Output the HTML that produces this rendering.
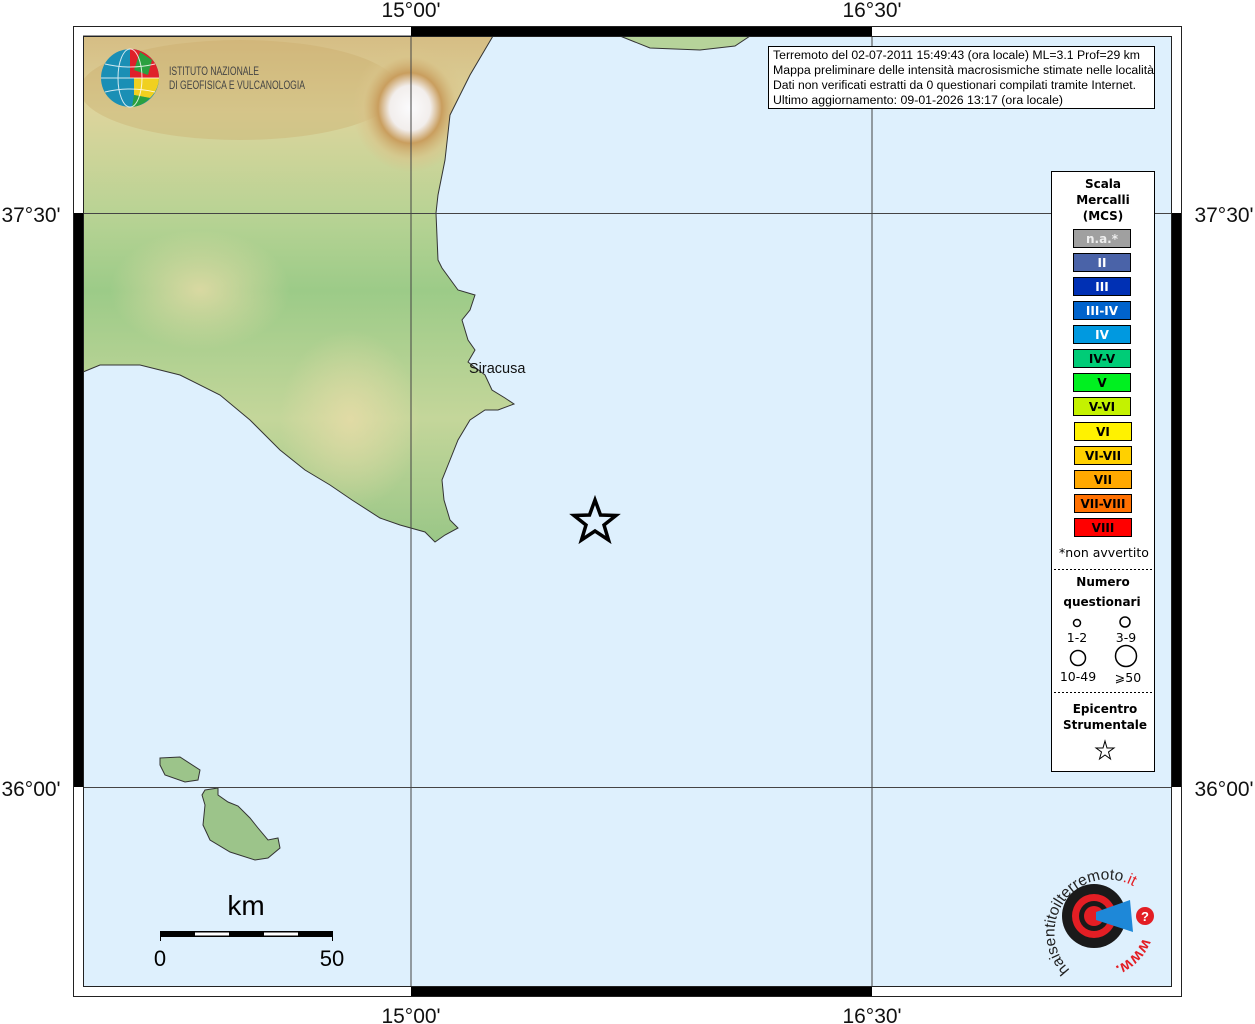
<!DOCTYPE html>
<html><head><meta charset="utf-8"><style>
html,body{margin:0;padding:0;background:#fff;}
svg{display:block;font-family:"Liberation Sans",sans-serif;}
.lt{font-family:"DejaVu Sans",sans-serif;font-weight:bold;font-size:12px;text-anchor:middle;}
</style></head><body>
<svg width="1255" height="1024" viewBox="0 0 1255 1024" xmlns="http://www.w3.org/2000/svg">
<defs>
<linearGradient id="land" x1="0" y1="0" x2="0" y2="1">
<stop offset="0" stop-color="#d6bd84"/>
<stop offset="0.15" stop-color="#dcd49c"/>
<stop offset="0.35" stop-color="#b8d394"/>
<stop offset="0.5" stop-color="#9ccb88"/>
<stop offset="0.75" stop-color="#c4d69a"/>
<stop offset="1" stop-color="#98c686"/>
</linearGradient>
<radialGradient id="etna" cx="0.5" cy="0.5" r="0.5">
<stop offset="0" stop-color="#fbfbfd"/>
<stop offset="0.35" stop-color="#f2eeec"/>
<stop offset="0.55" stop-color="#c99e5e"/>
<stop offset="0.8" stop-color="#d9c48a" stop-opacity="0.6"/>
<stop offset="1" stop-color="#d9c48a" stop-opacity="0"/>
</radialGradient>
<radialGradient id="hills" cx="0.5" cy="0.5" r="0.5">
<stop offset="0" stop-color="#e8dca8" stop-opacity="0.8"/>
<stop offset="1" stop-color="#e8dca8" stop-opacity="0"/>
</radialGradient>
<clipPath id="sic"><path d="M83,36 L493,36 L470,75 L450,115 L445,160 L438,195 L436,213 L438,260 L442,268 L458,290 L475,295 L470,310 L462,320 L468,340 L475,350 L468,362 L485,375 L492,390 L505,398 L514,404 L498,410 L485,410 L470,420 L458,440 L450,460 L442,480 L444,500 L450,520 L458,528 L445,535 L435,542 L425,532 L400,525 L380,518 L352,500 L330,485 L305,470 L280,450 L250,420 L220,395 L180,375 L140,365 L100,365 L83,372 Z"/></clipPath>
</defs>
<rect width="1255" height="1024" fill="#fff"/>
<rect x="83" y="36" width="1089" height="951" fill="#def0fd"/>
<rect x="83" y="36" width="440" height="510" fill="url(#land)" clip-path="url(#sic)"/>
<g clip-path="url(#sic)">
<ellipse cx="350" cy="420" rx="70" ry="90" fill="url(#hills)"/>
<ellipse cx="200" cy="290" rx="90" ry="60" fill="url(#hills)"/>
<ellipse cx="240" cy="90" rx="160" ry="50" fill="#c9a868" opacity="0.35"/>
<ellipse cx="410" cy="108" rx="58" ry="64" fill="url(#etna)"/>
</g>
<path d="M83,36 L493,36 L470,75 L450,115 L445,160 L438,195 L436,213 L438,260 L442,268 L458,290 L475,295 L470,310 L462,320 L468,340 L475,350 L468,362 L485,375 L492,390 L505,398 L514,404 L498,410 L485,410 L470,420 L458,440 L450,460 L442,480 L444,500 L450,520 L458,528 L445,535 L435,542 L425,532 L400,525 L380,518 L352,500 L330,485 L305,470 L280,450 L250,420 L220,395 L180,375 L140,365 L100,365 L83,372" fill="none" stroke="#333" stroke-width="1"/>
<path d="M620,36 L750,36 L735,46 L700,50 L650,48 Z" fill="#b6d39a" stroke="#333" stroke-width="1"/>
<path d="M160,758 L180,757 L200,770 L198,780 L185,782 L165,775 L160,765 Z" fill="#9cc48a" stroke="#333" stroke-width="1"/>
<path d="M205,790 L218,788 L218,795 L228,802 L238,806 L250,818 L258,828 L268,840 L278,838 L280,848 L268,858 L255,860 L230,852 L210,840 L203,825 L205,805 L202,795 Z" fill="#9cc48a" stroke="#333" stroke-width="1"/>
<g stroke="#444" stroke-width="1">
<line x1="411" y1="36" x2="411" y2="987"/><line x1="872" y1="36" x2="872" y2="987"/>
<line x1="83" y1="213.5" x2="1172" y2="213.5"/><line x1="83" y1="787.5" x2="1172" y2="787.5"/>
</g>
<rect x="73.5" y="26.5" width="1108" height="970" fill="none" stroke="#222"/>
<rect x="83.5" y="36.5" width="1088" height="950" fill="none" stroke="#222"/>
<rect x="411" y="27" width="461" height="9" fill="#000"/>
<rect x="411" y="987" width="461" height="9" fill="#000"/>
<rect x="74" y="213" width="9" height="574" fill="#000"/>
<rect x="1172" y="213" width="9" height="574" fill="#000"/>
<g font-size="21" fill="#111" text-anchor="middle">
<text x="411" y="17">15°00'</text><text x="872" y="17">16°30'</text>
<text x="411" y="1023">15°00'</text><text x="872" y="1023">16°30'</text>
<text x="31" y="222">37°30'</text><text x="31" y="796">36°00'</text>
<text x="1224" y="222">37°30'</text><text x="1224" y="796">36°00'</text>
</g>
<text x="469" y="373" font-size="14.5" fill="#111">Siracusa</text>
<path d="M595,500 L600.5,515 L616,515.5 L604,525 L608.5,540 L595,531 L581.5,540 L586,525 L574,515.5 L589.5,515 Z" fill="none" stroke="#000" stroke-width="3.5"/>
<circle cx="130" cy="78" r="29" fill="#1a8fb5"/>
<path d="M130,49 A29,29 0 0 1 159,78 L130,78 Z" fill="#e0202a"/>
<path d="M140,52 L152,60 L148,75 L134,70 Z" fill="#2aa040"/>
<path d="M134,78 L159,78 A29,29 0 0 1 150,98 L134,95 Z" fill="#f0d020"/>
<path d="M134,95 L150,98 A29,29 0 0 1 132,107 Z" fill="#2aa040"/>
<g stroke="#fff" stroke-width="1" fill="none" opacity="0.8"><ellipse cx="130" cy="78" rx="12" ry="29"/><line x1="101" y1="78" x2="159" y2="78"/><path d="M105,64 Q130,70 155,64"/><path d="M105,92 Q130,86 155,92"/></g>
<text x="169" y="75" font-size="12" fill="#444" textLength="90" lengthAdjust="spacingAndGlyphs">ISTITUTO NAZIONALE</text>
<text x="169" y="89" font-size="12" fill="#444" textLength="136" lengthAdjust="spacingAndGlyphs">DI GEOFISICA E VULCANOLOGIA</text>
<rect x="768.5" y="46.5" width="386" height="62" fill="#fff" stroke="#000"/>
<g font-size="11.5" fill="#000">
<text x="773" y="59" textLength="367" lengthAdjust="spacingAndGlyphs">Terremoto del 02-07-2011 15:49:43 (ora locale) ML=3.1 Prof=29 km</text>
<text x="773" y="74" textLength="381" lengthAdjust="spacingAndGlyphs">Mappa preliminare delle intensità macrosismiche stimate nelle località</text>
<text x="773" y="89" textLength="363" lengthAdjust="spacingAndGlyphs">Dati non verificati estratti da 0 questionari compilati tramite Internet.</text>
<text x="773" y="104" textLength="290" lengthAdjust="spacingAndGlyphs">Ultimo aggiornamento: 09-01-2026 13:17 (ora locale)</text>
</g>
<rect x="1051.5" y="171.5" width="103" height="600" fill="#fff" stroke="#000"/>
<g class="lt" fill="#000">
<text x="1103" y="188">Scala</text><text x="1103" y="204">Mercalli</text><text x="1103" y="220">(MCS)</text>
</g>
<g stroke="#000" stroke-width="1">
<rect x="1073.5" y="229.5" width="57" height="18" fill="#a0a0a0"/>
<rect x="1073.5" y="253.5" width="57" height="18" fill="#4a63a8"/>
<rect x="1073.5" y="277.5" width="57" height="18" fill="#0030b4"/>
<rect x="1073.5" y="301.5" width="57" height="18" fill="#0063cc"/>
<rect x="1073.5" y="325.5" width="57" height="18" fill="#0099e0"/>
<rect x="1073.5" y="349.5" width="57" height="18" fill="#00cc77"/>
<rect x="1073.5" y="373.5" width="57" height="18" fill="#00f020"/>
<rect x="1073.5" y="397.5" width="57" height="18" fill="#c4f200"/>
<rect x="1074.5" y="422.5" width="57" height="18" fill="#fff200"/>
<rect x="1074.5" y="446.5" width="57" height="18" fill="#ffd000"/>
<rect x="1074.5" y="470.5" width="57" height="18" fill="#ffa800"/>
<rect x="1074.5" y="494.5" width="57" height="18" fill="#ff7000"/>
<rect x="1074.5" y="518.5" width="57" height="18" fill="#ff0000"/>
</g>
<g class="lt">
<text x="1102" y="243" fill="#eee">n.a.*</text>
<text x="1102" y="267" fill="#fff">II</text>
<text x="1102" y="291" fill="#fff">III</text>
<text x="1102" y="315" fill="#fff">III-IV</text>
<text x="1102" y="339" fill="#fff">IV</text>
<text x="1102" y="363" fill="#000">IV-V</text>
<text x="1102" y="387" fill="#000">V</text>
<text x="1102" y="411" fill="#000">V-VI</text>
<text x="1103" y="436" fill="#000">VI</text>
<text x="1103" y="460" fill="#000">VI-VII</text>
<text x="1103" y="484" fill="#000">VII</text>
<text x="1103" y="508" fill="#000">VII-VIII</text>
<text x="1103" y="532" fill="#000">VIII</text>
</g>
<text x="1104" y="557" font-size="12.5" text-anchor="middle" font-family="DejaVu Sans,sans-serif">*non avvertito</text>
<line x1="1054" y1="569.5" x2="1152" y2="569.5" stroke="#000" stroke-dasharray="2,2"/>
<g class="lt"><text x="1103" y="586">Numero</text><text x="1102" y="606">questionari</text></g>
<g fill="none" stroke="#000" stroke-width="1.5">
<circle cx="1077" cy="623" r="3.5"/><circle cx="1125" cy="622" r="5"/>
<circle cx="1078" cy="658" r="7.5"/><circle cx="1126" cy="656" r="10.5"/>
</g>
<g font-size="12.5" text-anchor="middle" font-family="DejaVu Sans,sans-serif">
<text x="1077" y="642">1-2</text><text x="1126" y="642">3-9</text>
<text x="1078" y="681">10-49</text><text x="1128" y="682">⩾50</text>
</g>
<line x1="1054" y1="692.5" x2="1152" y2="692.5" stroke="#000" stroke-dasharray="2,2"/>
<g class="lt"><text x="1105" y="713">Epicentro</text><text x="1105" y="729">Strumentale</text></g>
<path d="M1105,741 L1107,748 L1114,748 L1108.5,752 L1110.5,759 L1105,755 L1099.5,759 L1101.5,752 L1096,748 L1103,748 Z" fill="none" stroke="#000" stroke-width="1"/>
<rect x="160" y="931" width="173" height="6" fill="#000"/>
<rect x="195" y="932.5" width="34" height="3" fill="#fff"/>
<rect x="264" y="932.5" width="34" height="3" fill="#fff"/>
<line x1="160.5" y1="931" x2="160.5" y2="941" stroke="#000"/><line x1="332.5" y1="931" x2="332.5" y2="941" stroke="#000"/>
<text x="246" y="915" font-size="28" text-anchor="middle">km</text>
<text x="160" y="966" font-size="22" text-anchor="middle">0</text>
<text x="332" y="966" font-size="22" text-anchor="middle">50</text>
<circle cx="1094" cy="916" r="32" fill="#1a1a1a"/>
<circle cx="1094" cy="916" r="22" fill="#e31e24"/>
<circle cx="1094" cy="916" r="15" fill="#1a1a1a"/>
<circle cx="1094" cy="916" r="10" fill="#e31e24"/>
<path d="M1096,912 L1130,900 L1133,932 L1096,920 Z" fill="#1e88d8"/>
<circle cx="1145" cy="916" r="9" fill="#e31e24"/>
<text x="1145" y="921" font-size="13" fill="#fff" text-anchor="middle" font-weight="bold">?</text>
<path id="arc" d="M1070,970 A47,47 0 1 1 1145,895" fill="none"/>
<text font-size="15.5" fill="#222"><textPath href="#arc">haisentitoilterremoto<tspan fill="#e31e24">.it</tspan></textPath></text>
<path id="arc2" d="M1143,938 A50,50 0 0 1 1098,970" fill="none"/>
<text font-size="16" fill="#e31e24" font-weight="bold"><textPath href="#arc2">www.</textPath></text>
</svg>
</body></html>
